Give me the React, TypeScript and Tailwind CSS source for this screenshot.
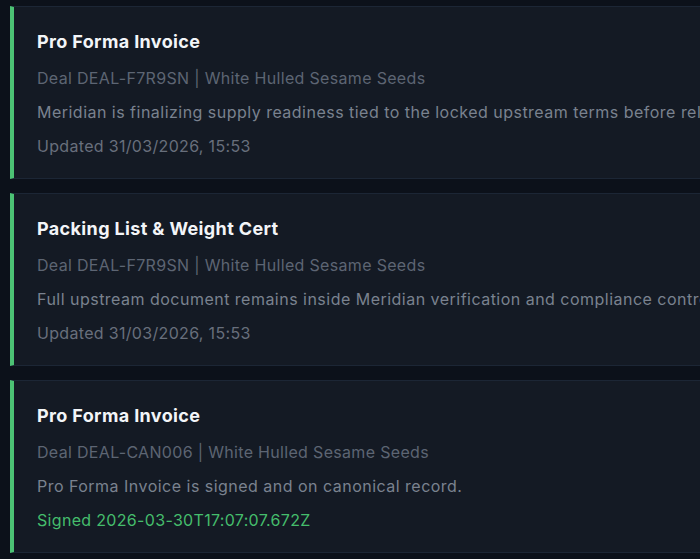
interface DocCard {
  title: string
  deal: string
  note: string
  stamp: string
  signed?: boolean
}

const cards: DocCard[] = [
  {
    title: "Pro Forma Invoice",
    deal: "Deal DEAL-F7R9SN | White Hulled Sesame Seeds",
    note: "Meridian is finalizing supply readiness tied to the locked upstream terms before release to the buyer.",
    stamp: "Updated 31/03/2026, 15:53",
  },
  {
    title: "Packing List & Weight Cert",
    deal: "Deal DEAL-F7R9SN | White Hulled Sesame Seeds",
    note: "Full upstream document remains inside Meridian verification and compliance controls.",
    stamp: "Updated 31/03/2026, 15:53",
  },
  {
    title: "Pro Forma Invoice",
    deal: "Deal DEAL-CAN006 | White Hulled Sesame Seeds",
    note: "Pro Forma Invoice is signed and on canonical record.",
    stamp: "Signed 2026-03-30T17:07:07.672Z",
    signed: true,
  },
]

export default function App() {
  return (
    <div className="w-[700px] h-[559px] overflow-hidden bg-[#0c111a] pl-[10px] pt-[6px] font-['Inter',sans-serif]">
      <div className="w-[900px] flex flex-col gap-[14px]">
        {cards.map((card, i) => (
          <div
            key={i}
            className="border border-[#1c2635] border-l-4 border-l-[#4cc274] bg-[#141a24] pl-[23px] pt-[21px] pb-[20px] flex flex-col gap-2.5"
          >
            <h3 className="text-lg leading-7 font-bold text-[#f3f5f8] tracking-[0.02em]">{card.title}</h3>
            <p className="text-base leading-6 text-[#5d6573] tracking-[0.02em] whitespace-nowrap">{card.deal}</p>
            <p className="text-base leading-6 text-[#7a828f] tracking-[0.03em] whitespace-nowrap">{card.note}</p>
            <p
              className={
                card.signed
                  ? "text-base leading-6 text-[#45bd6c] tracking-[0.02em] whitespace-nowrap"
                  : "text-base leading-6 text-[#686f7c] tracking-[0.02em] whitespace-nowrap"
              }
            >
              {card.stamp}
            </p>
          </div>
        ))}
      </div>
    </div>
  )
}
